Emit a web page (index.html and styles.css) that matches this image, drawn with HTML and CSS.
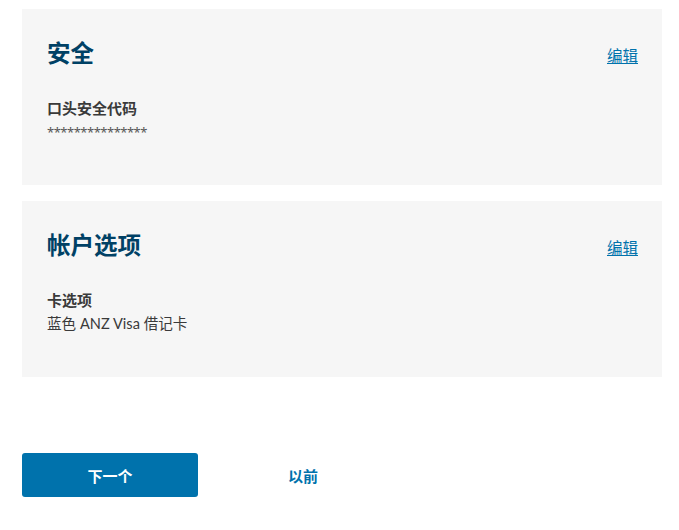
FILE: index.html
```html
<!DOCTYPE html>
<html lang="zh-CN">
<head>
<meta charset="utf-8">
<link rel="stylesheet" href="styles.css">
</head>
<body>
<div class="page">
  <section class="card">
    <div class="card-head">
      <h2 class="card-title">安全</h2>
      <a class="edit" href="#">编辑</a>
    </div>
    <div class="field-label">口头安全代码</div>
    <div class="field-value mask">***************</div>
  </section>
  <section class="card">
    <div class="card-head">
      <h2 class="card-title">帐户选项</h2>
      <a class="edit" href="#">编辑</a>
    </div>
    <div class="field-label">卡选项</div>
    <div class="field-value">蓝色 ANZ Visa 借记卡</div>
  </section>
  <div class="actions">
    <button class="btn-primary">下一个</button>
    <button class="btn-link">以前</button>
  </div>
</div>
</body>
</html>
```
FILE: styles.css
```css
html, body {
  margin: 0;
  padding: 0;
  background: #ffffff;
}
body {
  font-family: "Lato", "Noto Sans CJK SC", sans-serif;
  color: #494949;
}
.page {
  width: 640px;
  padding: 9px 0 0 22px;
  display: flex;
  flex-direction: column;
  gap: 16px;
}
.card {
  background: #f6f6f6;
  padding: 28px 24px 42px 25px;
}
.card-head {
  display: flex;
  justify-content: space-between;
  align-items: center;
  margin-bottom: 28px;
}
.card-title {
  margin: 0;
  font-size: 23.5px;
  line-height: 32px;
  font-weight: 700;
  color: #004165;
}
.edit {
  font-size: 15.5px;
  line-height: 20px;
  color: #0072ac;
  text-decoration: underline;
  margin-top: 6px;
}
.field-label {
  font-size: 15px;
  line-height: 22px;
  font-weight: 700;
  color: #3a3a3a;
}
.field-value {
  font-size: 14.6px;
  line-height: 22px;
  padding-top: 2px;
  color: #3a3a3a;
}
.mask {
  font-family: "Noto Sans", sans-serif;
  font-size: 13px;
  letter-spacing: -0.5px;
  color: #555;
}
.actions {
  display: flex;
  gap: 17px;
  margin-top: 60px;
}
.btn-primary, .btn-link {
  width: 176px;
  height: 44px;
  border: 0;
  border-radius: 3px;
  font-family: "Lato", "Noto Sans CJK SC", sans-serif;
  font-size: 15px;
  font-weight: 700;
}
.btn-primary {
  background: #0072ac;
  color: #ffffff;
}
.btn-link {
  background: transparent;
  color: #0072ac;
}
```
